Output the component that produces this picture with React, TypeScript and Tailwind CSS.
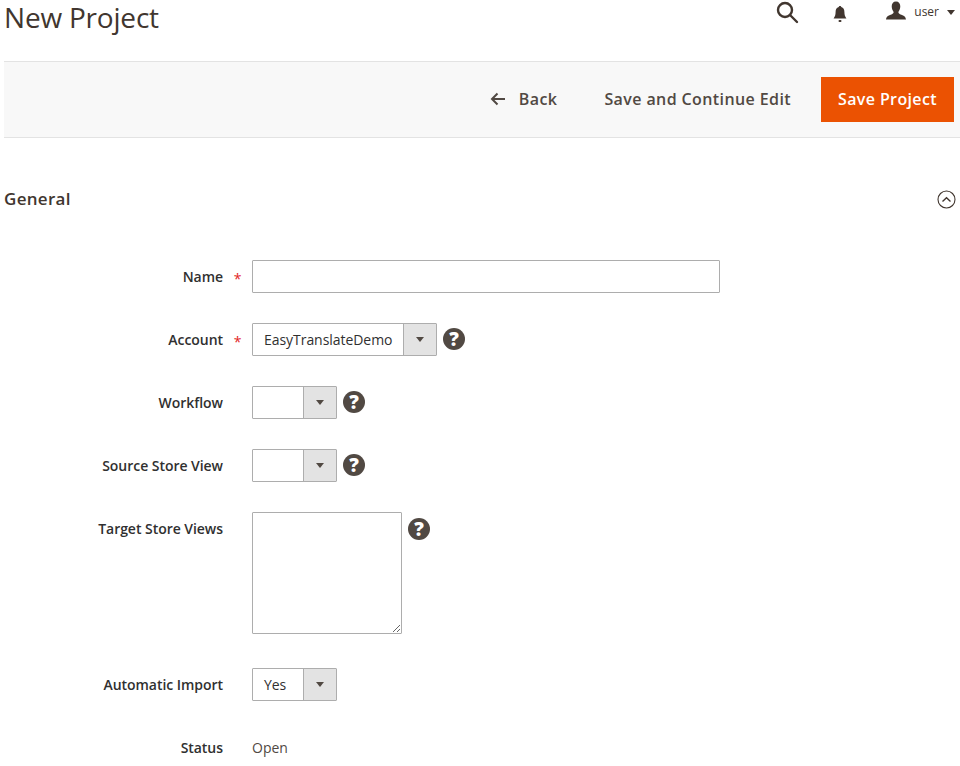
import React from 'react';

const HelpIcon = () => (
  <div className="w-[22px] h-[22px] rounded-full bg-[#514943] text-white flex items-center justify-center text-[19px] font-extrabold leading-none shrink-0">
    ?
  </div>
);

const Select = ({ value, wide }: { value?: string; wide?: boolean }) => (
  <div className={`flex h-[33px] border border-[#adadad] rounded-[1px] bg-white ${wide ? 'w-[185px]' : 'w-[85px]'}`}>
    <div className="flex-1 pl-[11px] text-[14px] tracking-[-0.05px] leading-[31px] text-[#303030] whitespace-nowrap overflow-hidden">{value}</div>
    <div className="w-[33px] bg-[#e3e3e3] border-l border-[#adadad] flex items-center justify-center">
      <div className="w-0 h-0 border-l-[4px] border-r-[4px] border-t-[5px] border-l-transparent border-r-transparent border-t-[#514943]" />
    </div>
  </div>
);

const Row = ({ label, required, className, children }: { label: string; required?: boolean; className?: string; children: React.ReactNode }) => (
  <div className={`flex items-start ${className ?? ''}`}>
    <div className="w-[219px] text-right text-[14px] font-semibold tracking-[-0.04px] text-[#303030] leading-[33px] whitespace-nowrap">{label}</div>
    <div className="w-[29px] h-[33px] text-center text-[#e22626] text-[14px] leading-[37px]">{required ? '*' : ''}</div>
    {children}
  </div>
);

export default function App() {
  return (
    <div className="h-[766px] overflow-hidden bg-white pl-[4px] font-['Open_Sans',sans-serif] text-[#303030]">
      {/* Page header */}
      <header className="h-[61px] flex justify-between items-start">
        <h1 className="text-[28px] font-normal leading-[35px] tracking-[-0.2px] text-[#41362f]">New Project</h1>
        <div className="flex items-start text-[#41362f]">
          <svg width="24" height="24" viewBox="0 0 24 24" fill="none" stroke="#41362f" strokeWidth="2.4">
            <circle cx="10" cy="10" r="7" />
            <path d="M15 15l7 7" strokeLinecap="round" />
          </svg>
          <svg className="ml-[32px] mt-[5px]" width="18" height="18" viewBox="0 0 18 18" fill="#41362f">
            <path d="M9 1c.8 0 1.200.5 1.300 1.100 2.200.6 3.100 2.500 3.100 4.900 0 3 .7 4.600 2 6.500H2.600c1.300-1.900 2-3.500 2-6.500 0-2.400.9-4.300 3.100-4.900C7.800 1.500 8.200 1 9 1z" />
            <rect x="7.500" y="15" width="3" height="2" rx="1" />
          </svg>
          <svg className="ml-[37px] mt-[1px]" width="20" height="20" viewBox="0 0 21 20" fill="#41362f">
            <path d="M10.500 0c3 0 4.500 2.200 4.500 5s-1 4.500-2 6c0 1.500 1 2 3 3 2.500 1 4.500 1.500 5 5H0c.5-3.500 2.500-4 5-5 2-1 3-1.500 3-3-1-1.500-2-3.200-2-6s1.500-5 4.500-5z" />
          </svg>
          <span className="ml-[8px] text-[12px] leading-[23px] text-[#41362f]">user</span>
          <div className="ml-[8px] mt-[10px] mr-[5px] w-0 h-0 border-l-[4px] border-r-[4px] border-t-[5px] border-l-transparent border-r-transparent border-t-[#41362f]" />
        </div>
      </header>

      {/* Action toolbar */}
      <div className="h-[77px] bg-[#f8f8f8] border-y border-[#e3e3e3] flex items-center justify-end pr-[6px] pb-[2px] text-[16px] font-semibold tracking-[0.4px] text-[#514943]">
        <svg width="15" height="14" viewBox="0 0 15 14" fill="none" stroke="#514943" strokeWidth="2">
          <path d="M15 7H2M7.500 1.500L2 7l5.500 5.500" />
        </svg>
        <span className="ml-[14px]">Back</span>
        <span className="ml-[47px]">Save and Continue Edit</span>
        <button className="ml-[30px] w-[133px] h-[45px] mt-[2px] pb-[2px] bg-[#eb5202] text-white font-semibold tracking-[0.38px]">Save Project</button>
      </div>

      {/* General section */}
      <div className="flex justify-between items-center h-[24px] mt-[49px] pr-[4px]">
        <h2 className="text-[17px] font-semibold tracking-[0.3px] text-[#41362f]">General</h2>
        <svg width="19" height="19" viewBox="0 0 19 19" fill="none" stroke="#41362f" strokeWidth="1.100">
          <circle cx="9.500" cy="9.500" r="8.500" />
          <path d="M5.500 11.500L9.500 7.800l4 3.700" strokeWidth="1.400" />
        </svg>
      </div>

      <div className="mt-[49px]">
        <Row label="Name" required className="mb-[30px]">
          <div className="w-[468px] h-[33px] border border-[#adadad] rounded-[1px] bg-white" />
        </Row>
        <Row label="Account" required className="mb-[30px]">
          <Select wide value="EasyTranslateDemo" />
          <div className="ml-[6px] mt-[5px]"><HelpIcon /></div>
        </Row>
        <Row label="Workflow" className="mb-[30px]">
          <Select />
          <div className="ml-[6px] mt-[5px]"><HelpIcon /></div>
        </Row>
        <Row label="Source Store View" className="mb-[30px]">
          <Select />
          <div className="ml-[6px] mt-[5px]"><HelpIcon /></div>
        </Row>
        <Row label="Target Store Views" className="mb-[34px]">
          <textarea className="w-[150px] h-[122px] border border-[#adadad] rounded-[1px] bg-white outline-none" />
          <div className="ml-[6px] mt-[6px]"><HelpIcon /></div>
        </Row>
        <Row label="Automatic Import" className="mb-[30px]">
          <Select value="Yes" />
        </Row>
        <Row label="Status">
          <span className="text-[14px] leading-[33px] text-[#514943]">Open</span>
        </Row>
      </div>
    </div>
  );
}
